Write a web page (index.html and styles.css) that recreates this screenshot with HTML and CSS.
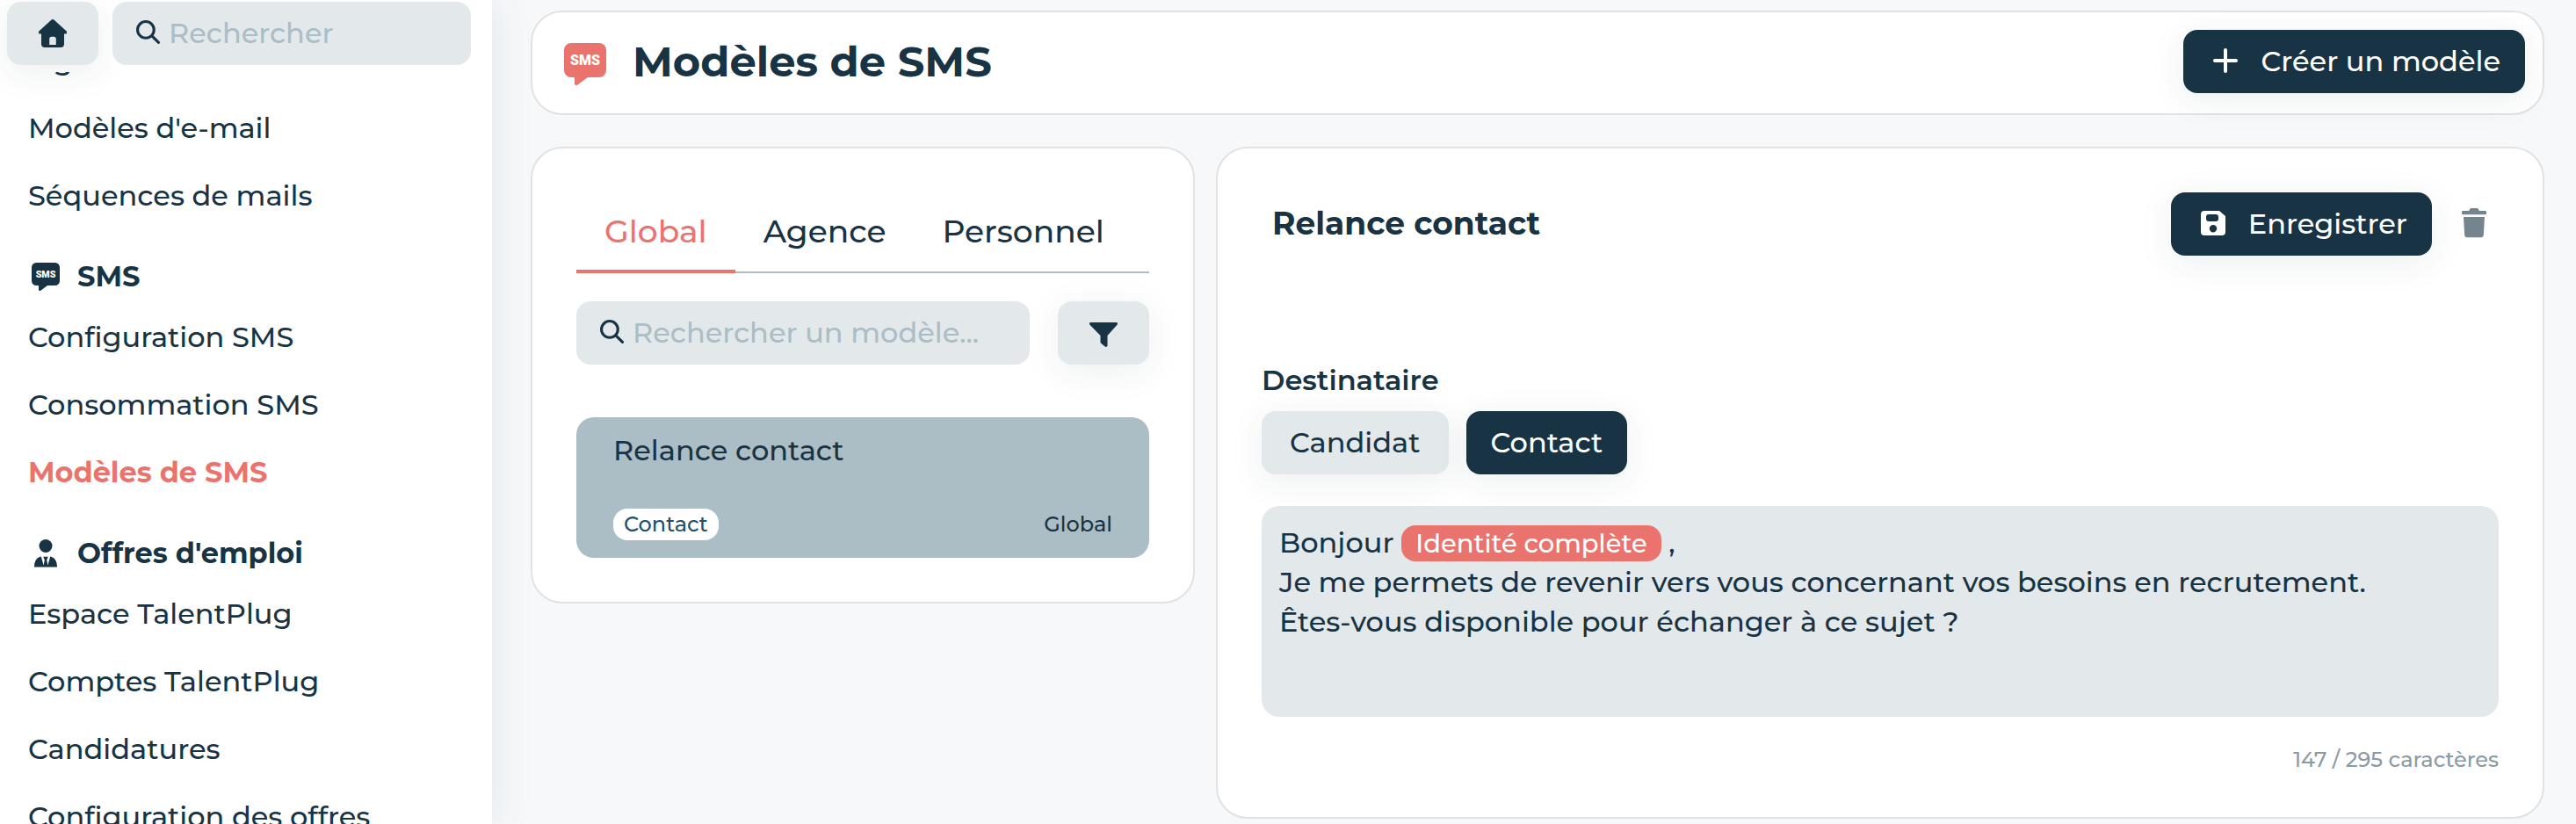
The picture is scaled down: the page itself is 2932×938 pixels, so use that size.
FILE: index.html
```html
<!DOCTYPE html>
<html lang="fr">
<head>
  <meta charset="UTF-8">
  <meta name="viewport" content="width=device-width, initial-scale=1">
  <title>Modèles de SMS</title>
  <link rel="stylesheet" href="styles.css">
</head>
<body>
  <aside class="sidebar">
    <div class="sidebar-top">
      <button type="button" class="btn btn-light btn-icon" aria-label="Accueil">
        <svg class="icon" viewBox="0 0 32 32" fill="currentColor">
          <path d="M14.600 .6a2 2 0 0 1 2.800 0l14 12.600a1.400 1.400 0 0 1 .5 1.600v.6c0 .8-.6 1.200-1.400 1.200H29V28a4 4 0 0 1-4 4H7a4 4 0 0 1-4-4V16.600H1.500c-.8 0-1.400-.4-1.400-1.200v-.6a1.400 1.400 0 0 1 .5-1.600zM12.200 29h7.600v-6.500c0-1.700-1-2.700-2.400-2.700h-2.800c-1.400 0-2.400 1-2.400 2.700z" fill-rule="evenodd"/>
        </svg>
      </button>
      <label class="search">
        <svg class="icon-search" viewBox="0 0 26 26" fill="none" stroke="currentColor" stroke-width="3" stroke-linecap="round">
          <circle cx="10.500" cy="10.500" r="9"/>
          <path d="M17.500 17.500l7 7"/>
        </svg>
        <input type="search" placeholder="Rechercher" aria-label="Rechercher">
      </label>
    </div>
    <nav class="menu">
      <a href="#">Signatures</a>
      <a href="#">Modèles d'e-mail</a>
      <a href="#">Séquences de mails</a>
      <h2>
        <svg class="icon" viewBox="0 0 48 48">
          <path fill="currentColor" d="M8 0h32a8 8 0 0 1 8 8v23a8 8 0 0 1-8 8H27l-11.500 8.600c-1.800 1.200-3.500.2-3.500-1.600v-7H8a8 8 0 0 1-8-8V8a8 8 0 0 1 8-8z"/>
          <text class="icon-sms" x="24" y="25" text-anchor="middle">SMS</text>
        </svg>
        SMS
      </h2>
      <a href="#">Configuration SMS</a>
      <a href="#">Consommation SMS</a>
      <a href="#" class="active">Modèles de SMS</a>
      <h2>
        <svg class="icon" viewBox="0 0 32 32" fill="currentColor">
          <circle cx="16" cy="7.500" r="7.500"/>
          <path d="M3 31.500C3 24 6 20.500 10.800 19.400L13.600 29.500l1.200-6-1.600-3.700h5.600l-1.600 3.700 1.200 6 2.800-10.100C26 20.500 29 24 29 31.500z"/>
        </svg>
        Offres d'emploi
      </h2>
      <a href="#">Espace TalentPlug</a>
      <a href="#">Comptes TalentPlug</a>
      <a href="#">Candidatures</a>
      <a href="#">Configuration des offres</a>
    </nav>
  </aside>

  <main class="content">
    <header class="card page-header">
      <svg class="icon-title" viewBox="0 0 48 48">
        <path fill="currentColor" d="M8 0h32a8 8 0 0 1 8 8v23a8 8 0 0 1-8 8H27l-11.500 8.600c-1.800 1.200-3.500.2-3.500-1.600v-7H8a8 8 0 0 1-8-8V8a8 8 0 0 1 8-8z"/>
        <text class="icon-sms" x="24" y="25" text-anchor="middle">SMS</text>
      </svg>
      <h1>Modèles de SMS</h1>
      <button type="button" class="btn btn-dark btn-with-icon">
        <svg class="icon" viewBox="0 0 32 32" fill="none" stroke="currentColor" stroke-width="4" stroke-linecap="round">
          <path d="M16 4v24M4 16h24"/>
        </svg>
        Créer un modèle
      </button>
    </header>

    <div class="columns">
      <section class="card panel">
        <div class="tabs" role="tablist">
          <button type="button" role="tab" class="tab selected" aria-selected="true">Global</button>
          <button type="button" role="tab" class="tab" aria-selected="false">Agence</button>
          <button type="button" role="tab" class="tab" aria-selected="false">Personnel</button>
        </div>
        <div class="filters">
          <label class="search">
            <svg class="icon-search" viewBox="0 0 26 26" fill="none" stroke="currentColor" stroke-width="3" stroke-linecap="round">
              <circle cx="10.500" cy="10.500" r="9"/>
              <path d="M17.500 17.500l7 7"/>
            </svg>
            <input type="search" placeholder="Rechercher un modèle..." aria-label="Rechercher un modèle">
          </label>
          <button type="button" class="btn btn-light btn-icon" aria-label="Filtrer">
            <svg class="icon" viewBox="0 0 32 32" fill="currentColor">
              <path d="M1.500 4h29c1.400 0 2 1.400 1 2.700L20.500 19v11c0 1.800-1.400 2.500-2.800 1.500l-4-3.200c-.8-.6-1.200-1.200-1.200-2.200V19L.5 6.700C-.5 5.400.1 4 1.500 4z"/>
            </svg>
          </button>
        </div>
        <a href="#" class="template">
          <span class="template-name">Relance contact</span>
          <span class="template-info">
            <span class="badge">Contact</span>
            <span>Global</span>
          </span>
        </a>
      </section>

      <section class="card panel">
        <div class="editor-header">
          <h2>Relance contact</h2>
          <button type="button" class="btn btn-dark btn-with-icon">
            <svg class="icon" viewBox="0 0 32 32" fill="currentColor">
              <path fill-rule="evenodd" d="M6 2h17l7 6v18a4 4 0 0 1-4 4H6a4 4 0 0 1-4-4V6a4 4 0 0 1 4-4zm5 4a3 3 0 0 0-3 3v2a3 3 0 0 0 3 3h8a3 3 0 0 0 3-3V9a3 3 0 0 0-3-3zm5 12a4.200 4.200 0 1 0 0 8.400 4.200 4.200 0 0 0 0-8.400z"/>
            </svg>
            Enregistrer
          </button>
          <button type="button" class="btn-trash" aria-label="Supprimer">
            <svg viewBox="0 0 28 34" fill="currentColor">
              <path d="M10 0h8l2 3h6.500a1.700 1.700 0 0 1 0 4.200h-25a1.700 1.700 0 0 1 0-4.200H8zM2 10h24l-1.200 20.500a3 3 0 0 1-3 2.800H6.200a3 3 0 0 1-3-2.800z"/>
            </svg>
          </button>
        </div>
        <h3 id="destinataire">Destinataire</h3>
        <div class="choices" role="group" aria-labelledby="destinataire">
          <button type="button" class="btn btn-light">Candidat</button>
          <button type="button" class="btn btn-dark">Contact</button>
        </div>
        <div class="message" role="textbox" aria-multiline="true" aria-label="Message" contenteditable="true" spellcheck="false">
          <p>Bonjour <span class="tag">Identité complète</span> ,</p>
          <p>Je me permets de revenir vers vous concernant vos besoins en recrutement.</p>
          <p>Êtes-vous disponible pour échanger à ce sujet ?</p>
        </div>
        <p class="counter">147 / 295 caractères</p>
      </section>
    </div>
  </main>
</body>
</html>
```
FILE: styles.css
```css
* {
  box-sizing: border-box;
}
body {
  margin: 0;
  height: 100vh;
  overflow: hidden;
  display: flex;
  background-color: #f7f8fa;
  color: #183444;
  font-family: Montserrat, Inter, sans-serif;
  font-size: 32px;
  font-weight: 500;
}
h1, h2, h3, p {
  margin: 0;
}
a {
  color: inherit;
  text-decoration: none;
}
svg {
  display: block;
  flex-shrink: 0;
}
.icon {
  width: 32px;
  height: 32px;
}
.icon-sms {
  fill: #fff;
  font-family: Roboto, sans-serif;
  font-size: 16px;
  font-weight: 900;
}

/* buttons and fields */
.btn {
  display: flex;
  align-items: center;
  justify-content: center;
  gap: 24px;
  height: 72px;
  padding: 0 28px 2px;
  border: none;
  border-radius: 16px;
  font: inherit;
  box-shadow: 0 8px 40px rgba(24, 52, 68, 0.08);
  cursor: pointer;
}
.btn-light {
  padding: 0 32px 2px;
  background-color: #e3e9eb;
  color: #183444;
}
.btn-dark {
  background-color: #183444;
  color: #fff;
}
.btn-with-icon {
  padding-left: 32px;
}
.btn-icon {
  width: 104px;
  flex-shrink: 0;
  padding: 0;
}
.search {
  flex: 1;
  min-width: 0;
  display: flex;
  align-items: center;
  gap: 10px;
  height: 72px;
  padding: 0 27px 2px;
  border-radius: 16px;
  background-color: #e3e9eb;
}
.icon-search {
  width: 27px;
  height: 27px;
  margin-bottom: 2px;
}
.search input {
  flex: 1;
  min-width: 0;
  padding: 0;
  border: none;
  outline: none;
  background: none;
  color: inherit;
  font: inherit;
}
.search input::placeholder {
  color: #abbdc5;
}

/* sidebar */
.sidebar {
  width: 560px;
  flex-shrink: 0;
  background-color: #fff;
  box-shadow: 0 0 48px rgba(24, 80, 100, 0.1);
}
.sidebar-top {
  position: relative;
  z-index: 1;
  display: flex;
  gap: 16px;
  padding: 2px 24px 8px 8px;
  background-color: #fff;
}
.menu {
  margin-top: -52px;
  padding: 0 32px;
}
.menu a {
  display: block;
  line-height: 77px;
}
.menu .active {
  color: #eb736e;
  font-weight: 700;
}
.menu h2 {
  display: flex;
  align-items: center;
  gap: 20px;
  margin-top: 24px;
  padding-left: 4px;
  font-size: 32px;
  font-weight: 700;
  line-height: 60px;
}

/* content */
.content {
  flex: 1;
  min-width: 0;
  padding: 12px 36px 6px 44px;
}
.card {
  border: 2px solid #e2e2e2;
  border-radius: 36px;
  background-color: #fff;
}
.page-header {
  display: flex;
  align-items: center;
  gap: 30px;
  padding: 20px 20px 23px 36px;
  margin-bottom: 36px;
}
.page-header h1 {
  flex: 1;
  font-size: 48px;
  font-weight: 700;
  line-height: 72px;
}
.icon-title {
  width: 48px;
  height: 48px;
  margin-top: 5px;
  color: #eb736e;
}
.columns {
  display: grid;
  grid-template-columns: 1fr 2fr;
  align-items: start;
  gap: 24px;
}
.panel {
  min-width: 0;
  padding: 50px;
}

/* template list */
.tabs {
  display: flex;
  box-shadow: inset 0 -2px #abbdc5;
}
.tab {
  height: 92px;
  padding: 0 32px;
  border: none;
  border-bottom: 4px solid transparent;
  background: none;
  color: inherit;
  font: inherit;
  font-size: 36px;
  cursor: pointer;
}
.tab.selected {
  border-color: #eb736e;
  color: #eb736e;
}
.filters {
  display: flex;
  gap: 32px;
  margin: 32px 0 60px;
}
.template {
  display: flex;
  flex-direction: column;
  justify-content: space-between;
  height: 160px;
  padding: 18px 42px 20px;
  border-radius: 20px;
  background-color: #abbdc5;
}
.template-name {
  line-height: 40px;
}
.template-info {
  display: flex;
  justify-content: space-between;
  font-size: 24px;
  line-height: 36px;
}
.badge {
  padding: 0 12px;
  border-radius: 16px;
  background-color: #fff;
  color: #23506b;
}

/* editor */
.editor-header {
  display: flex;
  align-items: center;
  margin-bottom: 122px;
}
.editor-header h2 {
  flex: 1;
  padding: 0 0 2px 12px;
  font-size: 36px;
  font-weight: 700;
}
.btn-trash {
  padding: 0 14px 2px 34px;
  border: none;
  background: none;
  color: #74858f;
  cursor: pointer;
}
.btn-trash svg {
  width: 28px;
  height: 34px;
}
h3 {
  margin-bottom: 15px;
  font-size: 32px;
  font-weight: 600;
  line-height: 40px;
}
.choices {
  display: flex;
  gap: 20px;
}
.message {
  min-height: 240px;
  margin: 36px 0 34px;
  padding: 19px 20px;
  border-radius: 20px;
  background-color: #e3e9eb;
  line-height: 45px;
  outline: none;
}
.tag {
  padding: 3px 16px;
  border-radius: 16px;
  background-color: #eb736e;
  color: #fff;
  font-size: 29px;
  line-height: 40px;
}
.counter {
  color: #8b9ba3;
  font-size: 24px;
  line-height: 30px;
  text-align: right;
}
```
